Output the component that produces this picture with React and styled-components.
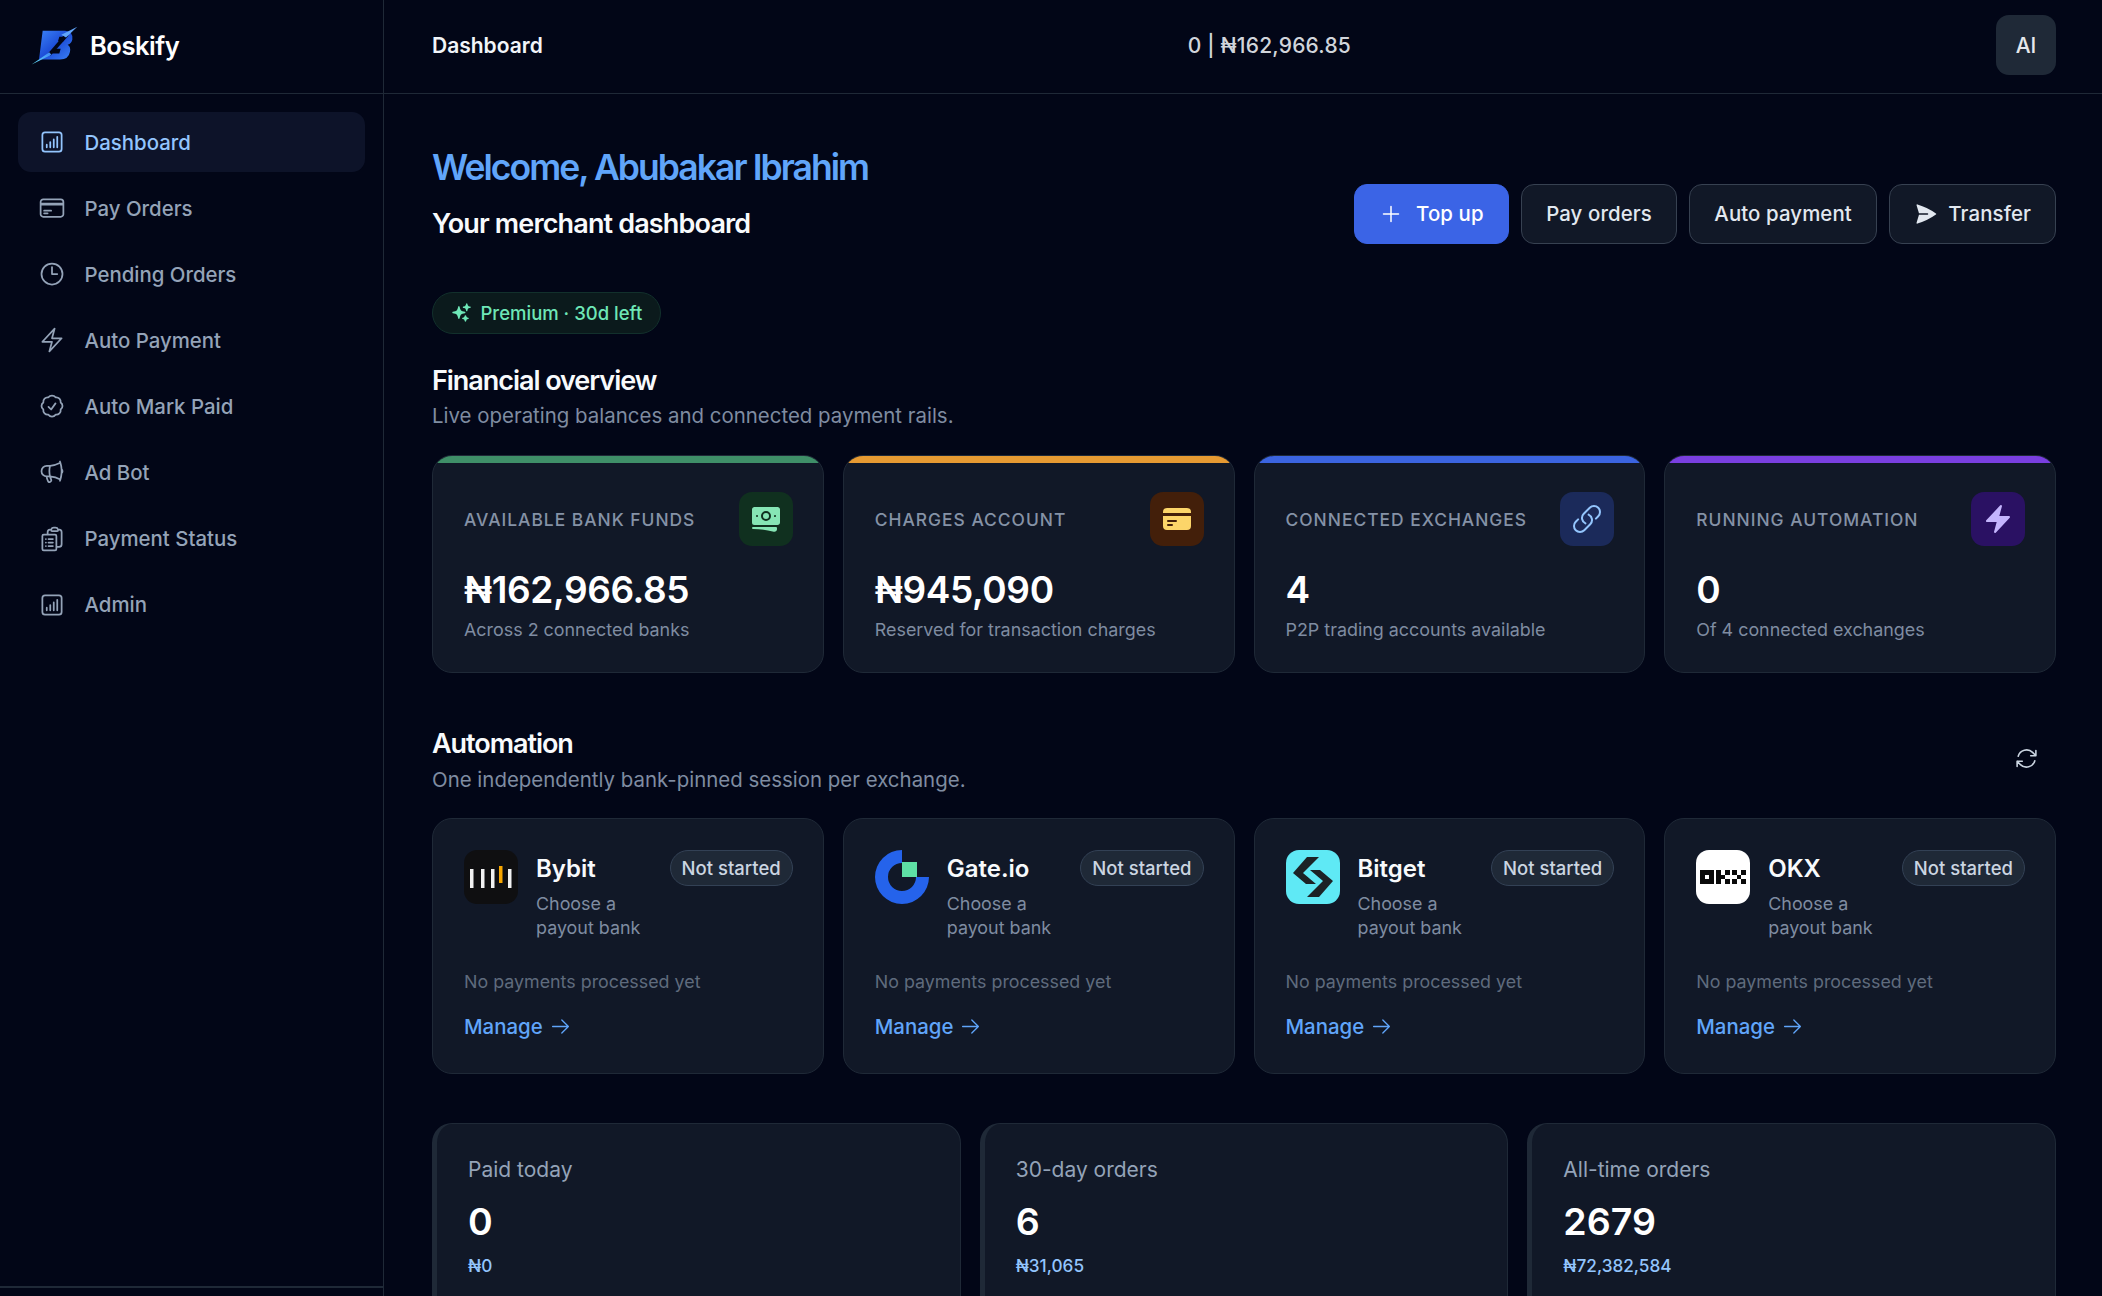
import styled, { createGlobalStyle } from "styled-components";
import {
  HiOutlineChartBarSquare,
  HiOutlineCreditCard,
  HiOutlineClock,
  HiOutlineBolt,
  HiOutlineCheckBadge,
  HiOutlineMegaphone,
  HiOutlineClipboardDocumentList,
  HiOutlinePlus,
  HiOutlineLink,
  HiOutlineArrowPath,
  HiOutlineArrowRight,
  HiSparkles,
  HiPaperAirplane,
  HiBanknotes,
  HiCreditCard,
  HiBolt,
} from "react-icons/hi2";

const GlobalStyle = createGlobalStyle`
  * { box-sizing: border-box; }
  html, body { margin: 0; height: 100%; background: #020617; }
  body { font-family: Inter, "Noto Sans", sans-serif; color: #fff; overflow: hidden; }
`;

const Shell = styled.div`
  display: grid;
  grid-template-columns: 384px 1fr;
  grid-template-rows: minmax(0, 1fr);
  height: 1296px;
  overflow: hidden;
`;

const Sidebar = styled.aside`
  display: flex;
  flex-direction: column;
  border-right: 1px solid #1f2937;
  min-height: 0;
`;

const Brand = styled.div`
  height: 94px;
  flex: none;
  display: flex;
  align-items: center;
  gap: 10px;
  padding: 0 0 2px 30px;
  border-bottom: 1px solid #1f2937;
  font-size: 25.6px;
  font-weight: 600;
  letter-spacing: -0.5px;
`;

const Nav = styled.nav`
  flex: 1;
  display: flex;
  flex-direction: column;
  gap: 6.1px;
  padding: 18px 18px 0;
`;

const NavItem = styled.a`
  height: 60px;
  display: flex;
  align-items: center;
  gap: 19px;
  padding-left: 19.5px;
  border-radius: 13px;
  font-size: 20.4px;
  font-weight: 500;
  color: ${(p) => (p.$active ? "#93c5fd" : "#94a3b8")};
  background: ${(p) => (p.$active ? "#0d1329" : "transparent")};
  svg { width: 28px; height: 28px; flex: none; }
`;

const SidebarFoot = styled.div`
  height: 10px;
  flex: none;
  border-top: 2px solid #1f2937;
`;

const Main = styled.main`
  min-width: 0;
  min-height: 0;
  overflow: hidden;
  display: flex;
  flex-direction: column;
`;

const TopBar = styled.header`
  height: 94px;
  flex: none;
  display: flex;
  justify-content: space-between;
  align-items: center;
  padding: 0 46px 3px 48px;
  border-bottom: 1px solid #1f2937;
`;

const TopTitle = styled.div`
  font-size: 21px;
  font-weight: 600;
  color: #f1f5f9;
`;

const TopBalance = styled.div`
  font-size: 21px;
  font-weight: 500;
  letter-spacing: 0.2px;
  color: #d1d5db;
`;

const Avatar = styled.div`
  width: 60px;
  height: 60px;
  border-radius: 13px;
  background: #1f2937;
  display: flex;
  align-items: center;
  justify-content: center;
  font-size: 21px;
  font-weight: 500;
  color: #e5e7eb;
`;

const Content = styled.div`
  padding: 50.3px 46px 0 48px;
`;

const HeroRow = styled.div`
  display: flex;
  justify-content: space-between;
  align-items: flex-end;
`;

const Welcome = styled.h1`
  margin: 0;
  font-size: 35.5px;
  line-height: 48px;
  font-weight: 600;
  letter-spacing: -1.95px;
  color: #60a5fa;
`;

const Tagline = styled.p`
  margin: 14px 0 1.7px;
  font-size: 27px;
  line-height: 36px;
  font-weight: 600;
  letter-spacing: -0.85px;
  color: #f8fafc;
`;

const Actions = styled.div`
  display: flex;
  gap: 12.5px;
`;

const ActionButton = styled.button`
  height: 60px;
  display: flex;
  align-items: center;
  gap: ${(p) => p.$gap || 12}px;
  padding: 0 24px;
  border-radius: 13px;
  font-family: inherit;
  font-size: 20.4px;
  font-weight: 500;
  letter-spacing: 0.1px;
  color: ${(p) => (p.$primary ? "#fff" : "#e2e8f0")};
  background: ${(p) => (p.$primary ? "#3b64e6" : "#111827")};
  border: 1px solid ${(p) => (p.$primary ? "#3b64e6" : "#374151")};
  svg { width: 24px; height: 24px; }
`;

const PremiumPill = styled.div`
  margin-top: 48px;
  display: inline-flex;
  align-items: center;
  gap: 9px;
  height: 42px;
  padding: 0 17.5px;
  border-radius: 21px;
  background: #0b1a1c;
  border: 1px solid #12302c;
  font-size: 18.5px;
  font-weight: 500;
  color: #6ee7b7;
  svg { width: 21px; height: 21px; }
`;

const SectionTitle = styled.h2`
  margin: 0;
  font-size: 27px;
  line-height: 36px;
  font-weight: 600;
  letter-spacing: -1.05px;
  color: #f8fafc;
`;

const SectionSub = styled.p`
  margin: 3.5px 0 0;
  font-size: 20.45px;
  line-height: 28px;
  color: #7f8ca1;
`;

const SectionHead = styled.div`
  margin-top: ${(p) => p.$top}px;
  display: flex;
  justify-content: space-between;
  align-items: center;
`;

const RefreshButton = styled.span`
  display: flex;
  color: #cbd5e1;
  margin: 0 17px 3px 0;
  svg { width: 25px; height: 25px; }
`;

const FourGrid = styled.div`
  display: grid;
  grid-template-columns: repeat(4, 1fr);
  gap: 19px;
  margin-top: 24.5px;
`;

const MetricCard = styled.div`
  position: relative;
  height: 218.5px;
  padding: 36.5px 30px 0 31px;
  border-radius: 20px;
  background: #111827;
  border: 1px solid #1f2937;
  overflow: hidden;
  &::before {
    content: "";
    position: absolute;
    top: 0;
    left: 0;
    right: 0;
    height: 7px;
    background: ${(p) => p.$accent};
  }
`;

const MetricHead = styled.div`
  display: flex;
  justify-content: space-between;
  align-items: center;
`;

const MetricLabel = styled.div`
  font-size: 17.4px;
  font-weight: 500;
  letter-spacing: 1px;
  color: #8592a6;
`;

const IconTile = styled.div`
  width: 54px;
  height: 54px;
  flex: none;
  border-radius: 13px;
  display: flex;
  align-items: center;
  justify-content: center;
  background: ${(p) => p.$bg};
  color: ${(p) => p.$fg};
  svg { width: 32px; height: 32px; }
`;

const MetricValue = styled.div`
  margin-top: 20.5px;
  font-size: 37px;
  line-height: 46px;
  font-weight: 600;
  letter-spacing: -0.4px;
  color: #fff;
`;

const MetricNote = styled.div`
  margin-top: 4.4px;
  font-size: 17.9px;
  line-height: 26px;
  color: #7f8ca1;
`;

const ExchangeCard = styled.div`
  height: 256px;
  padding: 31px 30px 0 31px;
  border-radius: 20px;
  background: #111827;
  border: 1px solid #1f2937;
`;

const ExchangeTop = styled.div`
  display: flex;
  align-items: flex-start;
  gap: 18px;
`;

const LogoTile = styled.div`
  width: 54px;
  height: 54px;
  flex: none;
  border-radius: 13px;
  overflow: hidden;
  svg { display: block; width: 54px; height: 54px; }
`;

const ExchangeInfo = styled.div`
  flex: 1;
  min-width: 0;
  padding-top: 1px;
`;

const ExchangeName = styled.div`
  font-size: 24px;
  line-height: 36px;
  font-weight: 600;
  color: #f8fafc;
`;

const ExchangeBank = styled.div`
  margin-top: 5px;
  width: 120px;
  font-size: 17.9px;
  line-height: 23.5px;
  color: #7f8ca1;
`;

const StatusPill = styled.div`
  flex: none;
  height: 36px;
  padding: 0 11px;
  display: flex;
  align-items: center;
  border-radius: 18px;
  background: #1f2937;
  border: 1px solid #334155;
  font-size: 18.5px;
  font-weight: 500;
  color: #cbd5e1;
`;

const ExchangeActivity = styled.div`
  margin-top: 29.5px;
  font-size: 17.85px;
  line-height: 26px;
  color: #5f6b7d;
`;

const ManageLink = styled.a`
  margin-top: 17px;
  display: inline-flex;
  align-items: center;
  gap: 7px;
  font-size: 20.4px;
  font-weight: 500;
  line-height: 30px;
  color: #60a5fa;
  svg { width: 21px; height: 21px; }
`;

const ThreeGrid = styled.div`
  display: grid;
  grid-template-columns: repeat(3, 1fr);
  gap: 19px;
  margin-top: 49px;
`;

const StatCard = styled.div`
  height: 200px;
  padding: 31px 31px 0;
  border-radius: 20px;
  background: #111827;
  border: 1px solid #1f2937;
  border-left-width: 5px;
`;

const StatLabel = styled.div`
  font-size: 21px;
  line-height: 30px;
  color: #94a3b8;
`;

const StatValue = styled.div`
  margin-top: 14px;
  font-size: 37.5px;
  line-height: 46px;
  font-weight: 600;
  color: #fff;
`;

const StatAmount = styled.div`
  margin-top: 8.5px;
  font-size: 17.2px;
  line-height: 24px;
  font-weight: 500;
  color: #93c5fd;
`;

const BrandMark = () => (
  <svg width="50" height="42" viewBox="30 45 150 125">
    <defs>
      <linearGradient id="brandBody" x1="0" y1="0" x2="1" y2="1">
        <stop offset="0" stopColor="#3b82f6" />
        <stop offset="0.5" stopColor="#1d4ed8" />
        <stop offset="1" stopColor="#3b82f6" />
      </linearGradient>
      <linearGradient id="brandSpike" x1="0" y1="1" x2="1" y2="0">
        <stop offset="0" stopColor="#67e8f9" />
        <stop offset="1" stopColor="#3b82f6" />
      </linearGradient>
    </defs>
    <path d="M68 62H135Q160 64 157 88Q155 100 143 104Q153 110 150 125Q146 148 120 148H57Z" fill="url(#brandBody)" />
    <path d="M118 80H136L131 93H114ZM102 116H122L118 130H96Z" fill="#020617" />
    <path d="M134 72L146 76L92 136L82 132Z" fill="#020617" />
    <path d="M124 74L172 50L138 82Z" fill="#60a5fa" />
    <path d="M35 163L88 126L94 134Z" fill="url(#brandSpike)" />
  </svg>
);

const BybitLogo = () => (
  <svg viewBox="0 0 54 54">
    <rect width="54" height="54" fill="#0f0f11" />
    <path d="M6 19h3.5v19H6zM17 19h3.5v19H17zM27 19h3.5v19H27zM44 19h3.5v19H44z" fill="#f1f1f1" />
    <rect x="35" y="16" width="3.5" height="17" fill="#f7a600" />
  </svg>
);

const GateLogo = () => (
  <svg viewBox="0 0 54 54">
    <path d="M27 0V13A14 14 0 1 0 41 27H54A27 27 0 1 1 27 0Z" fill="#2563eb" />
    <rect x="27" y="12" width="15" height="15" fill="#5ee0a5" />
  </svg>
);

const BitgetLogo = () => (
  <svg viewBox="0 0 54 54">
    <rect width="54" height="54" fill="#5fe9f5" />
    <path d="M21 7H33L17 23L30 34H20L7 23Z" fill="#1c2326" />
    <path d="M33 47H21L37 31L24 20H34L47 31Z" fill="#1c2326" />
  </svg>
);

const OkxLogo = () => (
  <svg viewBox="0 0 54 54">
    <rect width="54" height="54" fill="#fff" />
    <path
      fillRule="evenodd"
      d="M4 20H18V34H4ZM9 25V29H13V25ZM20 20H25V25H20ZM20 25H25V29H20ZM20 29H25V34H20ZM25 25H29V29H25ZM29 20H34V25H29ZM29 29H34V34H29ZM36 20H41V25H36ZM36 29H41V34H36ZM41 25H45V29H41ZM45 20H50V25H45ZM45 29H50V34H45Z"
      fill="#0a0a0a"
    />
  </svg>
);

const navItems = [
  { label: "Dashboard", icon: HiOutlineChartBarSquare, active: true },
  { label: "Pay Orders", icon: HiOutlineCreditCard },
  { label: "Pending Orders", icon: HiOutlineClock },
  { label: "Auto Payment", icon: HiOutlineBolt },
  { label: "Auto Mark Paid", icon: HiOutlineCheckBadge },
  { label: "Ad Bot", icon: HiOutlineMegaphone },
  { label: "Payment Status", icon: HiOutlineClipboardDocumentList },
  { label: "Admin", icon: HiOutlineChartBarSquare },
];

const metrics = [
  { label: "AVAILABLE BANK FUNDS", value: "₦162,966.85", note: "Across 2 connected banks", accent: "#3f8f68", bg: "#10301f", fg: "#86e5b5", icon: HiBanknotes },
  { label: "CHARGES ACCOUNT", value: "₦945,090", note: "Reserved for transaction charges", accent: "#e69a32", bg: "#431f0a", fg: "#fcd569", icon: HiCreditCard },
  { label: "CONNECTED EXCHANGES", value: "4", note: "P2P trading accounts available", accent: "#3b64e0", bg: "#1b2a5a", fg: "#93c5fd", icon: HiOutlineLink },
  { label: "RUNNING AUTOMATION", value: "0", note: "Of 4 connected exchanges", accent: "#7a3fe0", bg: "#2a1163", fg: "#c4b5fd", icon: HiBolt },
];

const exchanges = [
  { name: "Bybit", logo: BybitLogo },
  { name: "Gate.io", logo: GateLogo },
  { name: "Bitget", logo: BitgetLogo },
  { name: "OKX", logo: OkxLogo },
];

const stats = [
  { label: "Paid today", value: "0", amount: "₦0" },
  { label: "30-day orders", value: "6", amount: "₦31,065" },
  { label: "All-time orders", value: "2679", amount: "₦72,382,584" },
];

export default function App() {
  return (
    <>
      <GlobalStyle />
      <Shell>
        <Sidebar>
          <Brand>
            <BrandMark />
            Boskify
          </Brand>
          <Nav>
            {navItems.map(({ label, icon: Icon, active }) => (
              <NavItem key={label} $active={active}>
                <Icon />
                {label}
              </NavItem>
            ))}
          </Nav>
          <SidebarFoot />
        </Sidebar>
        <Main>
          <TopBar>
            <TopTitle>Dashboard</TopTitle>
            <TopBalance>0 | ₦162,966.85</TopBalance>
            <Avatar>AI</Avatar>
          </TopBar>
          <Content>
            <HeroRow>
              <div>
                <Welcome>Welcome, Abubakar Ibrahim</Welcome>
                <Tagline>Your merchant dashboard</Tagline>
              </div>
              <Actions>
                <ActionButton $primary $gap={13}>
                  <HiOutlinePlus />
                  Top up
                </ActionButton>
                <ActionButton>Pay orders</ActionButton>
                <ActionButton>Auto payment</ActionButton>
                <ActionButton $gap={10}>
                  <HiPaperAirplane />
                  Transfer
                </ActionButton>
              </Actions>
            </HeroRow>
            <PremiumPill>
              <HiSparkles />
              Premium · 30d left
            </PremiumPill>
            <SectionHead $top={29}>
              <div>
                <SectionTitle>Financial overview</SectionTitle>
                <SectionSub>Live operating balances and connected payment rails.</SectionSub>
              </div>
            </SectionHead>
            <FourGrid>
              {metrics.map(({ label, value, note, accent, bg, fg, icon: Icon }) => (
                <MetricCard key={label} $accent={accent}>
                  <MetricHead>
                    <MetricLabel>{label}</MetricLabel>
                    <IconTile $bg={bg} $fg={fg}>
                      <Icon />
                    </IconTile>
                  </MetricHead>
                  <MetricValue>{value}</MetricValue>
                  <MetricNote>{note}</MetricNote>
                </MetricCard>
              ))}
            </FourGrid>
            <SectionHead $top={53}>
              <div>
                <SectionTitle>Automation</SectionTitle>
                <SectionSub>One independently bank-pinned session per exchange.</SectionSub>
              </div>
              <RefreshButton>
                <HiOutlineArrowPath />
              </RefreshButton>
            </SectionHead>
            <FourGrid>
              {exchanges.map(({ name, logo: Logo }) => (
                <ExchangeCard key={name}>
                  <ExchangeTop>
                    <LogoTile>
                      <Logo />
                    </LogoTile>
                    <ExchangeInfo>
                      <ExchangeName>{name}</ExchangeName>
                      <ExchangeBank>Choose a payout bank</ExchangeBank>
                    </ExchangeInfo>
                    <StatusPill>Not started</StatusPill>
                  </ExchangeTop>
                  <ExchangeActivity>No payments processed yet</ExchangeActivity>
                  <ManageLink>
                    Manage
                    <HiOutlineArrowRight />
                  </ManageLink>
                </ExchangeCard>
              ))}
            </FourGrid>
            <ThreeGrid>
              {stats.map((s) => (
                <StatCard key={s.label}>
                  <StatLabel>{s.label}</StatLabel>
                  <StatValue>{s.value}</StatValue>
                  <StatAmount>{s.amount}</StatAmount>
                </StatCard>
              ))}
            </ThreeGrid>
          </Content>
        </Main>
      </Shell>
    </>
  );
}
